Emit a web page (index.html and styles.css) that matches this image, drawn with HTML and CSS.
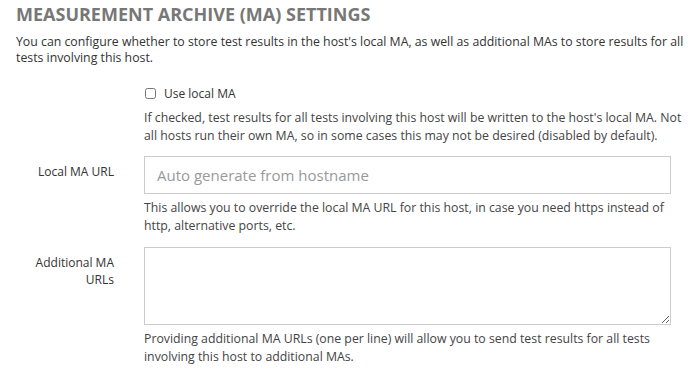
FILE: index.html
```html
<!DOCTYPE html>
<html>
<head>
<meta charset="utf-8">
<link rel="stylesheet" href="styles.css">
</head>
<body>
<div class="page">
  <h2 class="title">MEASUREMENT ARCHIVE (MA) SETTINGS</h2>
  <p class="intro">You can configure whether to store test results in the host's local MA, as well as additional MAs to store results for all tests involving this host.</p>

  <div class="row row-check">
    <div class="label"></div>
    <div class="field">
      <label class="check"><input type="checkbox" class="box"><span>Use local MA</span></label>
      <p class="help">If checked, test results for all tests involving this host will be written to the host's local MA. Not all hosts run their own MA, so in some cases this may not be desired (disabled by default).</p>
    </div>
  </div>

  <div class="row row-url">
    <div class="label">Local MA URL</div>
    <div class="field">
      <input class="text" type="text" placeholder="Auto generate from hostname">
      <p class="help">This allows you to override the local MA URL for this host, in case you need https instead of http, alternative ports, etc.</p>
    </div>
  </div>

  <div class="row row-extra">
    <div class="label">Additional MA URLs</div>
    <div class="field">
      <textarea class="area"></textarea>
      <p class="help">Providing additional MA URLs (one per line) will allow you to send test results for all tests involving this host to additional MAs.</p>
    </div>
  </div>
</div>
</body>
</html>
```

FILE: styles.css
```css
html, body {
  margin: 0;
  padding: 0;
  background: #fff;
}
.page {
  font-family: "Open Sans", "DejaVu Sans", sans-serif;
  color: #333;
  padding: 3px 6px 0 16px;
  width: 695px;
  box-sizing: border-box;
}
.title {
  font-size: 18px;
  font-weight: 700;
  color: #777;
  margin: 0;
  line-height: 22px;
}
.intro {
  font-size: 12.3px;
  line-height: 16px;
  margin: 9px 0 0;
}
.row {
  display: grid;
  grid-template-columns: 98px 1fr;
  column-gap: 30px;
  margin-right: 18px;
}
.row-check {
  margin-top: 19px;
}
.row-url {
  margin-top: 11px;
}
.row-extra {
  margin-top: 12px;
}
.label {
  text-align: right;
  font-size: 12px;
  line-height: 17px;
  padding-top: 7px;
  color: #333;
}
.field {
  display: flex;
  flex-direction: column;
}
.check {
  display: flex;
  align-items: center;
  gap: 8px;
  font-size: 12px;
  line-height: 17px;
}
.box {
  margin: 0 0 0 1px;
  width: 11px;
  height: 11px;
}
.help {
  font-size: 12.3px;
  line-height: 18px;
  margin: 5px -18px 0 0;
  color: #444;
}
.text, .area {
  box-sizing: border-box;
  width: 100%;
  border: 1px solid #ccc;
  border-radius: 0;
  font-family: "Open Sans", sans-serif;
  margin: 0;
}
.text {
  height: 38px;
  padding: 0 12px;
  font-size: 15px;
}
.text::placeholder {
  color: #999;
}
.area {
  height: 78px;
  resize: vertical;
  display: block;
}
.row-check .field .help {
  margin-top: 7px;
}
```
